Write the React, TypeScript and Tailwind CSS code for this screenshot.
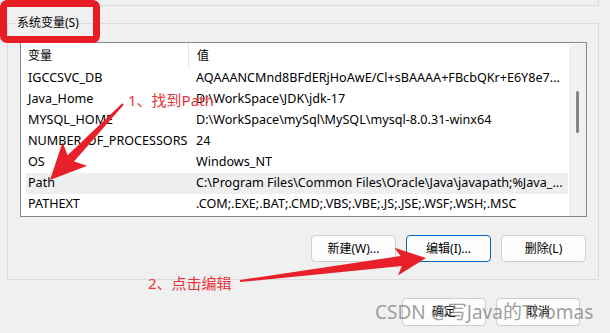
import React from 'react';

const rows = [
  { name: 'IGCCSVC_DB', value: 'AQAAANCMnd8BFdERjHoAwE/Cl+sBAAAA+FBcbQKr+E6Y8e7...' },
  { name: 'Java_Home', value: 'D:\\WorkSpace\\JDK\\jdk-17' },
  { name: 'MYSQL_HOME', value: 'D:\\WorkSpace\\mySql\\MySQL\\mysql-8.0.31-winx64' },
  { name: 'NUMBER_OF_PROCESSORS', value: '24' },
  { name: 'OS', value: 'Windows_NT' },
  { name: 'Path', value: 'C:\\Program Files\\Common Files\\Oracle\\Java\\javapath;%Java_...', selected: true },
  { name: 'PATHEXT', value: '.COM;.EXE;.BAT;.CMD;.VBS;.VBE;.JS;.JSE;.WSF;.WSH;.MSC' },
];

function Button({ label, focused }: { label: string; focused?: boolean }) {
  return (
    <button
      className={
        'w-full h-full flex items-center justify-center rounded-[4px] border bg-[#fdfdfd] text-[12px] text-black ' +
        (focused ? 'border-[#0067c0]' : 'border-[#d0d0d0]')
      }
    >
      {label}
    </button>
  );
}

export default function App() {
  return (
    <div
      className="relative w-[610px] h-[333px] overflow-hidden bg-[#f0f0f0] text-black"
      style={{ fontFamily: '"Noto Sans", "Noto Sans CJK SC", sans-serif' }}
    >
      {/* previous group box, only its bottom edge shows */}
      <div className="ml-[7px] w-[592px] h-[6px] border-x border-b border-[#dcdcdc]" />

      {/* system variables group */}
      <div className="relative mt-[17px] ml-[7px] w-[592px] h-[257px] border border-[#dcdcdc]">
        <span className="absolute -top-[9px] left-[8px] px-[1px] bg-[#f0f0f0] text-[12px] leading-[16px]">
          系统变量(S)
        </span>

        <div className="mt-[18px] ml-[12px] w-[567px] h-[175px] border border-[#828790] bg-white flex">
          <div className="flex-1 flex flex-col">
            <div className="flex h-[25px] text-[12px]">
              <div className="w-[168px] border-r border-[#e5e5e5] pl-[7px] flex items-center">变量</div>
              <div className="flex-1 pl-[8px] flex items-center">值</div>
            </div>
            {rows.map((r) => (
              <div
                key={r.name}
                className={
                  'ml-[5px] flex h-[21px] items-center text-[12.6px] whitespace-nowrap ' +
                  (r.selected ? 'bg-[#efefef]' : '')
                }
              >
                <div className="w-[163px] pl-[2px] overflow-hidden">{r.name}</div>
                <div className="flex-1 pl-[7px] overflow-hidden">{r.value}</div>
              </div>
            ))}
          </div>
          <div className="w-[18px] border-l border-t border-white bg-[#f0f0f0] pt-[47px]">
            <div className="mx-auto w-[3px] h-[42px] rounded-full bg-[#858585]" />
          </div>
        </div>

        <div className="mt-[18px] pr-[12px] flex justify-end gap-[10px] h-[27px]">
          <div className="w-[85px] flex"><Button label="新建(W)..." /></div>
          <div className="w-[85px] flex"><Button label="编辑(I)..." focused /></div>
          <div className="w-[85px] flex"><Button label="删除(L)" /></div>
        </div>
      </div>

      <div className="mt-[18px] pr-[30px] flex justify-end gap-[10px] h-[28px]">
        <div className="w-[84px] flex"><Button label="确定" /></div>
        <div className="w-[84px] flex"><Button label="取消" /></div>
      </div>

      {/* annotations */}
      <div className="absolute left-0 top-0 w-[100px] h-[43px] rounded-[7px] border-[7px] border-[#e81c24]" />
      <span className="absolute left-[128px] top-[90px] text-[15px] leading-[20px] text-[#e8353b]">1、找到Path</span>
      <span className="absolute left-[148px] top-[273px] text-[15px] leading-[20px] text-[#e8353b]">2、点击编辑</span>
      <svg className="absolute inset-0 pointer-events-none" width="610" height="333" viewBox="0 0 610 333">
        <polygon
          fill="#e8202a"
          points="123.7,104.7 74,161.5 87.2,165.8 50,180 62.6,142.2 67.6,155.3 122.3,103.3"
        />
        <polygon
          fill="#e8202a"
          points="239.9,280 400.6,256.1 394.5,247.8 426,258 397.9,275.6 401.8,266.1 240.1,282"
        />
      </svg>
      <span className="absolute left-[375px] top-[298px] text-[19px] leading-[28px] text-[#858585]/80 whitespace-nowrap">
        CSDN @写Java的Thomas
      </span>
    </div>
  );
}
